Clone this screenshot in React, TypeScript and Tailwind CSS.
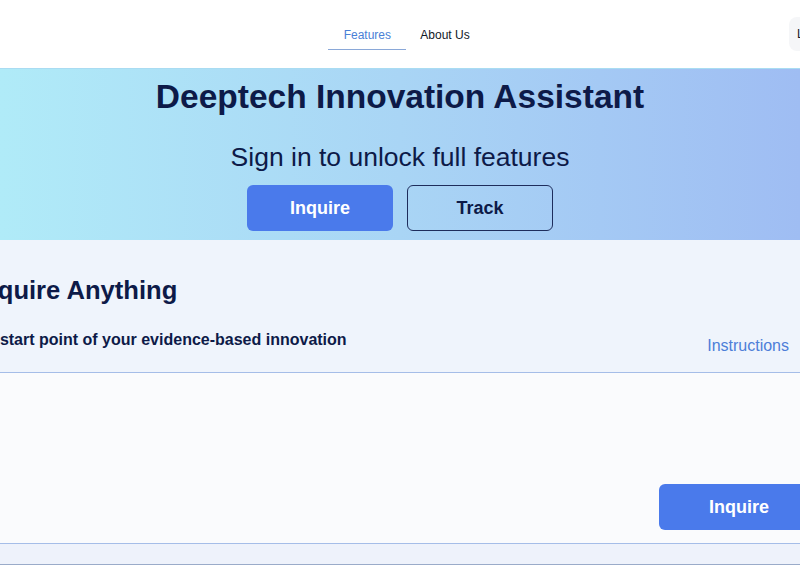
import React from 'react';

export default function App() {
  return (
    <div className="w-[800px] h-[576px] overflow-hidden bg-white font-['Liberation_Sans',Arial,sans-serif] text-[#0d1a48]">
      {/* Header */}
      <header className="relative h-[68px] flex justify-center items-start bg-white">
        <nav className="flex items-center pt-[26px] ml-[-2px]">
          <a className="w-[78px] h-[24px] flex justify-center items-start text-[12px] text-[#4a7fd6] border-b border-[#8aa8d8]">
            Features
          </a>
          <a className="ml-[14px] h-[24px] flex items-start text-[12px] text-[#111827]">About Us</a>
        </nav>
        <button className="absolute left-[789px] top-[17px] h-[34px] pl-[8px] pr-3 rounded-lg bg-[#f5f6f8] text-[12px] text-[#111827]">
          Login
        </button>
      </header>

      {/* Hero */}
      <section className="h-[172px] border-t border-[#a9dcf2] bg-gradient-to-r from-[#b0ebf8] via-[#a9d5f5] to-[#9fbdf3] flex flex-col items-center pt-[8px]">
        <h1 className="text-[33.5px] leading-[40px] font-bold text-[#0d1a48]">Deeptech Innovation Assistant</h1>
        <p className="mt-[24px] text-[26.5px] leading-[32px] text-[#0d1a48]">Sign in to unlock full features</p>
        <div className="mt-[12px] flex gap-[14px]">
          <button className="w-[146px] h-[46px] rounded-md bg-[#4a7aeb] text-white text-[18px] font-bold">Inquire</button>
          <button className="w-[146px] h-[46px] rounded-md border border-[#1e2d5c] text-[#0d1a48] text-[18px] font-bold">Track</button>
        </div>
      </section>

      {/* Inquire section */}
      <section className="bg-[#eff4fc]">
        <div className="pt-[32px] flex items-end justify-between pr-[11px]">
          <div className="ml-[-25px]">
            <h2 className="text-[25.6px] leading-[36px] font-bold text-[#0d1a48]">Inquire Anything</h2>
            <p className="mt-[20px] ml-[-8px] text-[16px] leading-[24px] font-bold text-[#0d1a48]">The start point of your evidence-based innovation</p>
          </div>
          <span className="mb-[-6px] text-[16px] leading-[24px] text-[#4d7ed8]">Instructions</span>
        </div>
        <div className="mt-[20px] h-[172px] border-y border-[#a5bde8] bg-[#fafbfd] flex items-end justify-end pb-[13px] mr-[-19px]">
          <button className="w-[160px] h-[46px] rounded-md bg-[#4a7aeb] text-white text-[18px] font-bold">Inquire</button>
        </div>
        <div className="h-[21px] border-b border-[#9aabc9] bg-[#eef2fb]" />
      </section>
    </div>
  );
}
